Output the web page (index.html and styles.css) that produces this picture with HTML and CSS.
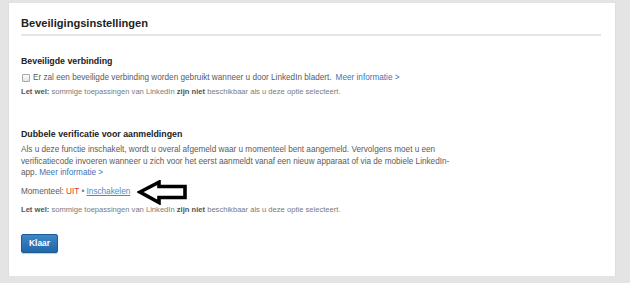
FILE: index.html
```html
<!DOCTYPE html>
<html lang="nl">
<head>
<meta charset="utf-8">
<title>Beveiligingsinstellingen</title>
<link rel="stylesheet" href="styles.css">
</head>
<body>
<div class="card">
  <h1 class="title">Beveiligingsinstellingen</h1>

  <section class="sec sec-first">
    <h2 class="sec-title">Beveiligde verbinding</h2>
    <label class="check-row"><input type="checkbox" class="check"> <span>Er zal een beveiligde verbinding worden gebruikt wanneer u door LinkedIn bladert.</span> <a class="link" href="#">Meer informatie &gt;</a></label>
    <p class="note"><b>Let wel:</b> sommige toepassingen van LinkedIn <b>zijn niet</b> beschikbaar als u deze optie selecteert.</p>
  </section>

  <section class="sec sec-second">
    <h2 class="sec-title">Dubbele verificatie voor aanmeldingen</h2>
    <p class="para">Als u deze functie inschakelt, wordt u overal afgemeld waar u momenteel bent aangemeld. Vervolgens moet u een verificatiecode invoeren wanneer u zich voor het eerst aanmeldt vanaf een nieuw apparaat of via de mobiele LinkedIn-app. <a class="link" href="#">Meer informatie &gt;</a></p>
    <div class="status">Momenteel: <span class="off">UIT</span> <span class="dot">&bull;</span> <a class="enable" href="#">Inschakelen</a>
      <svg class="arrow" width="52" height="25" viewBox="0 0 52 25" aria-hidden="true">
        <polygon points="3,12 22,2.2 22,6.5 48,6.5 48,17.5 22,17.5 22,22.5" fill="#fff" stroke="#000" stroke-width="3.6" stroke-linejoin="miter"/>
      </svg>
    </div>
    <p class="note note-2"><b>Let wel:</b> sommige toepassingen van LinkedIn <b>zijn niet</b> beschikbaar als u deze optie selecteert.</p>
  </section>

  <button class="btn" type="button">Klaar</button>
</div>
</body>
</html>
```

FILE: styles.css
```css
html, body {
  margin: 0;
  padding: 0;
}
body {
  background: #e4e4e4;
  padding: 3px 15px 0 9px;
  font-family: "Liberation Sans", Arial, sans-serif;
  color: #5b5b5b;
  font-size: 8.2px;
}
.card {
  background: #fff;
  height: 273px;
  box-sizing: border-box;
  padding: 13px 14px 0 12px;
  box-shadow: 0 1px 1px rgba(0,0,0,0.18);
}
.title {
  margin: 0;
  font-size: 11.1px;
  line-height: 14px;
  font-weight: bold;
  color: #222;
  padding-bottom: 4px;
  border-bottom: 2px solid #e6e6e6;
}
.sec-title {
  margin: 0;
  font-size: 8.8px;
  line-height: 12px;
  font-weight: bold;
  color: #222;
}
.sec-first {
  margin-top: 19px;
}
.sec-second {
  margin-top: 31px;
}
.check-row {
  display: flex;
  align-items: center;
  margin-top: 5px;
  line-height: 12px;
  white-space: nowrap;
}
.check-row > span {
  margin-right: 4px;
}
.check {
  -webkit-appearance: none;
  appearance: none;
  width: 8px;
  height: 8px;
  margin: 0 3px 0 1px;
  border: 1px solid #a8a8a8;
  border-radius: 1px;
  background: linear-gradient(#fdfdfd, #e6e6e6);
  box-sizing: border-box;
}
.link {
  color: #3b73b6;
  text-decoration: none;
}
.note {
  margin: 3px 0 0;
  font-size: 7.6px;
  line-height: 10px;
  color: #7a7a7a;
}
.note b {
  color: #555;
}
.para {
  margin: 4px 0 0;
  max-width: 432px;
  line-height: 11.5px;
}
.status {
  position: relative;
  margin-top: 7px;
  line-height: 11px;
}
.off {
  color: #d9362f;
}
.dot {
  color: #777;
}
.enable {
  color: #4a8cc7;
  text-decoration: underline;
}
.arrow {
  position: absolute;
  left: 116px;
  top: -6px;
}
.note-2 {
  margin-top: 8px;
}
.btn {
  display: block;
  margin-top: 19px;
  width: 37px;
  height: 19px;
  padding: 0;
  font-family: "Liberation Sans", Arial, sans-serif;
  font-size: 8.4px;
  font-weight: bold;
  color: #fff;
  border: 1px solid #1c5d97;
  border-radius: 2px;
  background: linear-gradient(#3f87c6, #2266a8);
  box-shadow: 0 1px 1px rgba(0,0,0,0.2);
}
```
